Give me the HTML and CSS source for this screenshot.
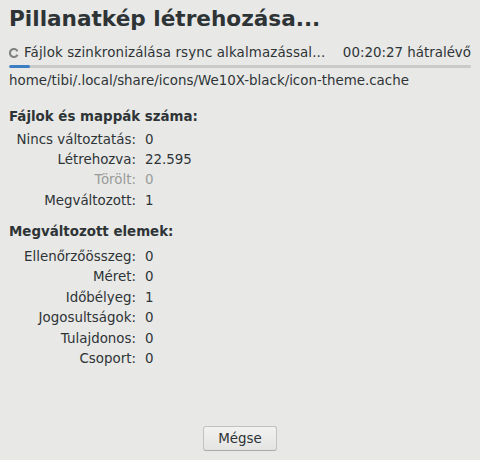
FILE: index.html
```html
<!DOCTYPE html>
<html>
<head>
<meta charset="utf-8">
<link rel="stylesheet" href="styles.css">
</head>
<body>
<div class="dialog">
  <h1 class="title">Pillanatkép létrehozása...</h1>
  <div class="status">
    <svg class="spinner" width="10" height="10" viewBox="0 0 10 10"><path d="M8.5 3.2 A4 4 0 1 0 8.5 6.8" fill="none" stroke="#7f8380" stroke-width="2"/></svg>
    <span class="status-text">Fájlok szinkronizálása rsync alkalmazással...</span>
    <span class="eta">00:20:27 hátralévő</span>
  </div>
  <div class="progress"><div class="progress-fill" style="width:21px"></div></div>
  <div class="path">home/tibi/.local/share/icons/We10X-black/icon-theme.cache</div>

  <div class="section-title first">Fájlok és mappák száma:</div>
  <div class="grid">
    <span class="label">Nincs változtatás:</span><span class="value">0</span>
    <span class="label">Létrehozva:</span><span class="value">22.595</span>
    <span class="label dim">Törölt:</span><span class="value dim">0</span>
    <span class="label">Megváltozott:</span><span class="value">1</span>
  </div>

  <div class="section-title second">Megváltozott elemek:</div>
  <div class="grid second-grid">
    <span class="label">Ellenőrzőösszeg:</span><span class="value">0</span>
    <span class="label">Méret:</span><span class="value">0</span>
    <span class="label">Időbélyeg:</span><span class="value">1</span>
    <span class="label">Jogosultságok:</span><span class="value">0</span>
    <span class="label">Tulajdonos:</span><span class="value">0</span>
    <span class="label">Csoport:</span><span class="value">0</span>
  </div>

  <div class="actions"><button class="btn">Mégse</button></div>
</div>
</body>
</html>
```
FILE: styles.css
```css
html, body {
  margin: 0;
  padding: 0;
  background: #e8e8e7;
}
body {
  font-family: "DejaVu Sans", sans-serif;
  font-size: 13.4px;
  color: #2e3436;
}
.dialog {
  width: 480px;
  height: 460px;
  box-sizing: border-box;
  padding: 5px 9px 0 9px;
  display: flex;
  flex-direction: column;
}
.title {
  margin: 0;
  font-size: 21.6px;
  font-weight: bold;
  line-height: 28px;
}
.status {
  display: flex;
  align-items: center;
  margin-top: 11.8px;
  height: 16px;
}
.spinner {
  margin-right: 5px;
}
.status-text {
  flex: 1;
  letter-spacing: 0.13px;
}
.progress {
  margin-top: 4.5px;
  height: 3px;
  background: #c9cbc9;
  border-radius: 2px;
  overflow: hidden;
}
.progress-fill {
  height: 3px;
  background: #3c7ec4;
  border-radius: 2px;
}
.path {
  margin-top: 4.8px;
  line-height: 16px;
}
.section-title {
  font-weight: bold;
  line-height: 16px;
}
.section-title.first {
  margin-top: 19.5px;
}
.section-title.second {
  margin-top: 14.8px;
}
.grid {
  display: grid;
  grid-template-columns: 127px auto;
  column-gap: 9px;
  row-gap: 4.4px;
  margin-top: 7px;
  line-height: 16px;
}
.grid.second-grid {
  margin-top: 9.5px;
}
.label {
  text-align: right;
}
.dim {
  color: #989b98;
}
.actions {
  margin-top: auto;
  margin-bottom: 9px;
  display: flex;
  justify-content: center;
}
.btn {
  font-family: "DejaVu Sans", sans-serif;
  font-size: 13.4px;
  color: #2e3436;
  width: 74px;
  height: 25px;
  border: 1px solid #c1c3c0;
  border-bottom-color: #a9aba8;
  border-radius: 3px;
  background: linear-gradient(#f2f2f1, #e4e4e3);
  padding: 0;
}
```
